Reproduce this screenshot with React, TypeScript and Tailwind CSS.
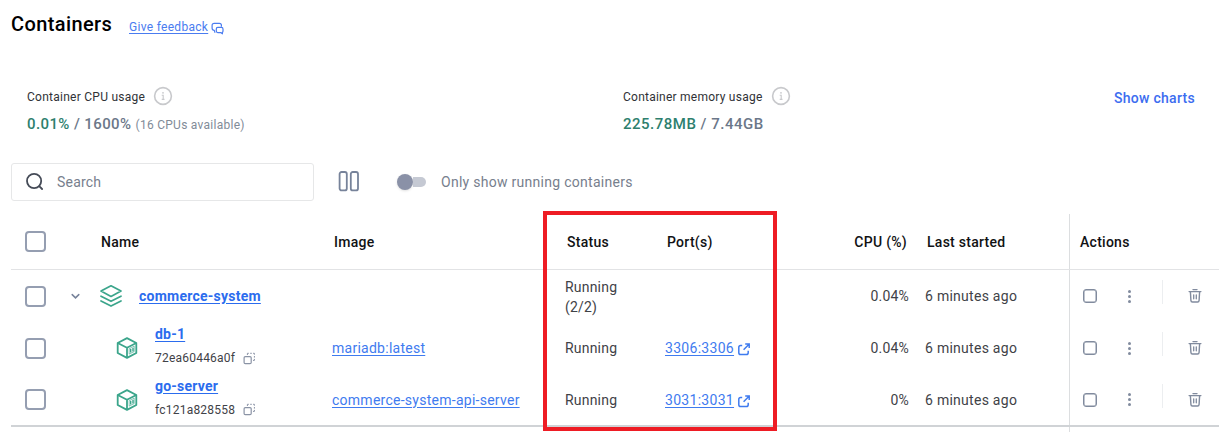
import React from "react";

const COLS =
  "grid grid-cols-[50px_271px_233px_100px_110px_134px_160px_150px]";

function InfoIcon() {
  return (
    <svg width="20" height="20" viewBox="0 0 20 20" fill="none" className="text-[#c8c9cc]">
      <circle cx="10" cy="10" r="8.4" stroke="currentColor" strokeWidth="1.6" />
      <path d="M8.7 9.2h1.5v4.1M8.7 13.4h2.8" stroke="currentColor" strokeWidth="1.1" />
      <circle cx="10" cy="6.8" r="0.9" fill="currentColor" />
    </svg>
  );
}

function FeedbackIcon() {
  return (
    <svg width="13" height="13" viewBox="0 0 13 13" fill="none" stroke="#4a7cf0" strokeWidth="1.2" strokeLinejoin="round" strokeLinecap="round">
      <path d="M3.9 10.3 3.3 8.3Q1.1 8.3 1.1 6.3V3.4Q1.1 1.3 3.2 1.3H8.4Q10.4 1.3 10.4 3.2V4.2" />
      <path d="M6.8 5.4H10.4Q12 5.4 12 6.9V8.9Q12 10 11.4 10.3V11.8L9.7 10.6H6.8Q5.3 10.6 5.3 9.1V6.9Q5.3 5.4 6.8 5.4Z" />
    </svg>
  );
}

function SearchIcon() {
  return (
    <svg width="20" height="20" viewBox="0 0 20 20" fill="none" stroke="#454b57" strokeWidth="1.8" strokeLinecap="round">
      <circle cx="9.1" cy="9" r="7.1" />
      <path d="M14.2 14.1 17.1 17" />
    </svg>
  );
}

function ColumnsIcon() {
  return (
    <svg width="22" height="22" viewBox="0 0 22 22" fill="none" stroke="#77839a" strokeWidth="1.8">
      <rect x="1.6" y="1" width="7.2" height="18.4" rx="2" />
      <rect x="12.8" y="1" width="7.2" height="18.4" rx="2" />
    </svg>
  );
}

function StackIcon() {
  return (
    <svg width="24" height="24" viewBox="0 0 24 24" fill="none" stroke="#3ba58b" strokeWidth="1.7" strokeLinejoin="round" strokeLinecap="round">
      <path d="M12 1.8 22 7.1 12 12.4 2 7.1Z" />
      <path d="M2 12.2 12 17.3 22 12.2" />
      <path d="M2 17 12 22.1 22 17" />
    </svg>
  );
}

function CubeIcon() {
  return (
    <svg width="22" height="22" viewBox="0 0 22 22" fill="none" stroke="#3ba58b" strokeWidth="1.8" strokeLinejoin="round">
      <path d="M11 1.1 20.3 6V16L11 20.9 1.7 16V6Z" />
      <path d="M1.7 6 11 10.8 20.3 6M11 10.8V20.9" />
      <path d="M13.2 11.6 18.2 9.1V14.6L13.2 17.1Z" strokeWidth="0.6" />
      <path d="M14.7 11.8V15.6M17 10.7V14.5" strokeWidth="1.4" />
    </svg>
  );
}

function CopyIcon() {
  return (
    <svg width="13" height="13" viewBox="0 0 13 13" fill="none" stroke="#8a93a5" strokeWidth="1.2">
      <rect x="1.1" y="4.6" width="7.1" height="7.1" rx="1.2" />
      <path d="M4.4 3V1.3H5.8M7.2 1.3H8.8M10.1 1.3H11.4V2.7M11.4 4V5.6M11.4 6.9V8.4H10" strokeWidth="1" />
    </svg>
  );
}

function ExternalIcon() {
  return (
    <svg width="14" height="14" viewBox="0 0 14 14" fill="none" stroke="#3f7bef" strokeWidth="1.5">
      <path d="M5.2 3.4H3.6Q1.8 3.4 1.8 5.2V10.8Q1.8 12.6 3.6 12.6H9.4Q11.2 12.6 11.2 10.8V8.8" />
      <path d="M8.2 2.1H12.2V6.1M12 2.3 6.6 7.7" />
    </svg>
  );
}

function TrashIcon() {
  return (
    <svg width="14" height="16" viewBox="0 0 14 16" fill="none" stroke="#818b9e" strokeWidth="1.4" strokeLinecap="round" strokeLinejoin="round">
      <path d="M1.1 3.6H12.9M5 1.6H9" />
      <path d="M2.4 3.8 2.9 12.4Q3 14 4.4 14H9.6Q11 14 11.1 12.4L11.6 3.8" />
      <path d="M5.7 6.8V10.8M8.3 6.8V10.8" strokeWidth="1.3" />
    </svg>
  );
}

function Checkbox() {
  return <div className="ml-[14px] h-[21px] w-[21px] rounded-[4px] border-2 border-[#959eb1] bg-white" />;
}

function Actions() {
  return (
    <div className="flex h-full items-center border-l border-[#dcdee0] pl-[13px]">
      <div className="h-[14px] w-[14px] rounded-[3px] border-[1.5px] border-[#818b9e] shadow-[inset_0_0_0_0.5px_#818b9e]" />
      <div className="ml-[30px] flex w-[4px] flex-col items-center gap-[2px]">
        <i className="h-[3px] w-[3px] rounded-full bg-[#818b9e]" />
        <i className="h-[3px] w-[3px] rounded-full bg-[#818b9e]" />
        <i className="h-[3px] w-[3px] rounded-full bg-[#818b9e]" />
      </div>
      <div className="ml-[31px] mt-[-8px] h-[24px] w-px bg-[#eceef0]" />
      <div className="ml-[25px]">
        <TrashIcon />
      </div>
    </div>
  );
}

type Child = { name: string; id: string; image: string; port: string; cpu: string };

const children: Child[] = [
  { name: "db-1", id: "72ea60446a0f", image: "mariadb:latest", port: "3306:3306", cpu: "0.04%" },
  { name: "go-server", id: "fc121a828558", image: "commerce-system-api-server", port: "3031:3031", cpu: "0%" },
];

function ChildRow({ c }: { c: Child }) {
  return (
    <div className={`${COLS} h-[52px] items-center last:h-[51px]`}>
      <Checkbox />
      <div className="flex items-center pl-[55px]">
        <CubeIcon />
        <div className="ml-[17px] flex flex-col pb-[4px]">
          <a className="text-[14px] leading-[22px] font-bold tracking-[0.22px] text-[#2b6cee] underline underline-offset-2">{c.name}</a>
          <div className="mt-[2px] flex items-center text-[12px] leading-[22px] tracking-[0.22px] text-[#3f4247]">
            <span className="w-[88px]">{c.id}</span>
            <CopyIcon />
          </div>
        </div>
      </div>
      <div><a className="tracking-[0.26px] text-[#3f7bef] underline underline-offset-2">{c.image}</a></div>
      <div>Running</div>
      <div className="flex items-center">
        <a className="w-[72px] tracking-[0.3px] text-[#3f7bef]"><span className="underline underline-offset-2">{c.port}</span></a>
        <div className="mt-[2px]"><ExternalIcon /></div>
      </div>
      <div className="text-right">{c.cpu}</div>
      <div className="pl-[16px] tracking-[0.27px]">6 minutes ago</div>
      <Actions />
    </div>
  );
}

export default function App() {
  return (
    <div className="relative h-[441px] w-[1225px] overflow-hidden bg-white pl-[11px] font-['Roboto',sans-serif] text-[14px] leading-[20px] tracking-[0.2px] text-[#3f4247]">
      <header className="flex h-[48px] items-center">
        <h1 className="w-[118px] text-[20px] font-medium tracking-[0.4px] text-black">Containers</h1>
        <a className="mt-[6px] w-[82px] text-[12px] tracking-[0.3px] text-[#4a7cf0] underline underline-offset-2">Give feedback</a>
        <div className="mt-[8px]"><FeedbackIcon /></div>
      </header>

      <section className="flex h-[115px] pt-[38px] pl-[16px]">
        <div className="w-[596px]">
          <div className="flex h-[20px] items-center text-[12px] tracking-[0.26px] text-[#303236]">
            <span className="w-[126px] pt-px">Container CPU usage</span>
            <InfoIcon />
          </div>
          <div className="mt-[8px] text-[15px] font-medium tracking-[0.4px] text-[#6b7789]">
            <span className="text-[#2e7f6e]">0.01%</span> / 1600%{" "}
            <span className="text-[12px] font-normal tracking-[0.26px] text-[#818b98]">(16 CPUs available)</span>
          </div>
        </div>
        <div className="w-[491px]">
          <div className="flex h-[20px] items-center text-[12px] tracking-[0.24px] text-[#303236]">
            <span className="w-[148px] pt-px">Container memory usage</span>
            <InfoIcon />
          </div>
          <div className="mt-[8px] text-[15px] font-medium tracking-[0.5px] text-[#6b7789]">
            <span className="text-[#2e7f6e]">225.78MB</span> / 7.44GB
          </div>
        </div>
        <a className="mt-[2px] font-medium tracking-[0.28px] whitespace-nowrap text-[#3c6df0]">Show charts</a>
      </section>

      <section className="flex h-[38px] items-center text-[#77808d]">
        <div className="flex h-[38px] w-[303px] items-center rounded-[3px] border border-[#e6e7e8] pl-[13px]">
          <SearchIcon />
          <span className="ml-[12px]">Search</span>
        </div>
        <div className="ml-[24px]"><ColumnsIcon /></div>
        <div className="ml-[37px] flex h-[16px] w-[29px] items-center">
          <div className="h-[16px] w-[16px] shrink-0 rounded-full bg-[#8a91a7] shadow-sm" />
          <div className="h-[10px] w-[13px] rounded-r-full bg-[#c5c9d3]" />
        </div>
        <span className="ml-[15px] tracking-[0.28px]">Only show running containers</span>
      </section>

      <main className="mt-[13px] w-[1208px]">
        <div className={`${COLS} h-[56px] items-center border-b border-[#e2e3e5] font-medium tracking-[0.27px] text-[#111214]`}>
          <Checkbox />
          <div className="pt-px pl-[40px]">Name</div>
          <div className="pt-px pl-[2px]">Image</div>
          <div className="pt-px pl-[2px]">Status</div>
          <div className="pt-px pl-[2px]">Port(s)</div>
          <div className="pt-px pr-[2px] text-right">CPU (%)</div>
          <div className="pt-px pl-[18px]">Last started</div>
          <div className="flex h-full items-center border-l border-[#dcdee0] pt-px pl-[10px]">Actions</div>
        </div>
        <div className={`${COLS} h-[52px] items-center`}>
          <Checkbox />
          <div className="flex items-center pl-[10px]">
            <svg width="9" height="7" viewBox="0 0 9 7" fill="none" stroke="#77839a" strokeWidth="1.5" strokeLinecap="round">
              <path d="M1.2 1.6 4.5 4.9 7.8 1.6" />
            </svg>
            <div className="ml-[19px]"><StackIcon /></div>
            <a className="ml-[16px] font-bold tracking-[0.24px] text-[#2b6cee] underline underline-offset-2">commerce-system</a>
          </div>
          <div />
          <div className="pt-px">Running<br />(2/2)</div>
          <div />
          <div className="text-right">0.04%</div>
          <div className="pl-[16px] tracking-[0.27px]">6 minutes ago</div>
          <Actions />
        </div>
        <div>
          {children.map((c) => (
            <ChildRow key={c.id} c={c} />
          ))}
        </div>
        <div className="h-[2px] w-full bg-[#d0d3d6]" />
        <div className="ml-[1058px] h-[5px] w-px bg-[#dcdee0]" />
      </main>

      <div className="absolute top-[211px] left-[543px] h-[220px] w-[234px] border-4 border-[#ee1c24]" />
    </div>
  );
}
